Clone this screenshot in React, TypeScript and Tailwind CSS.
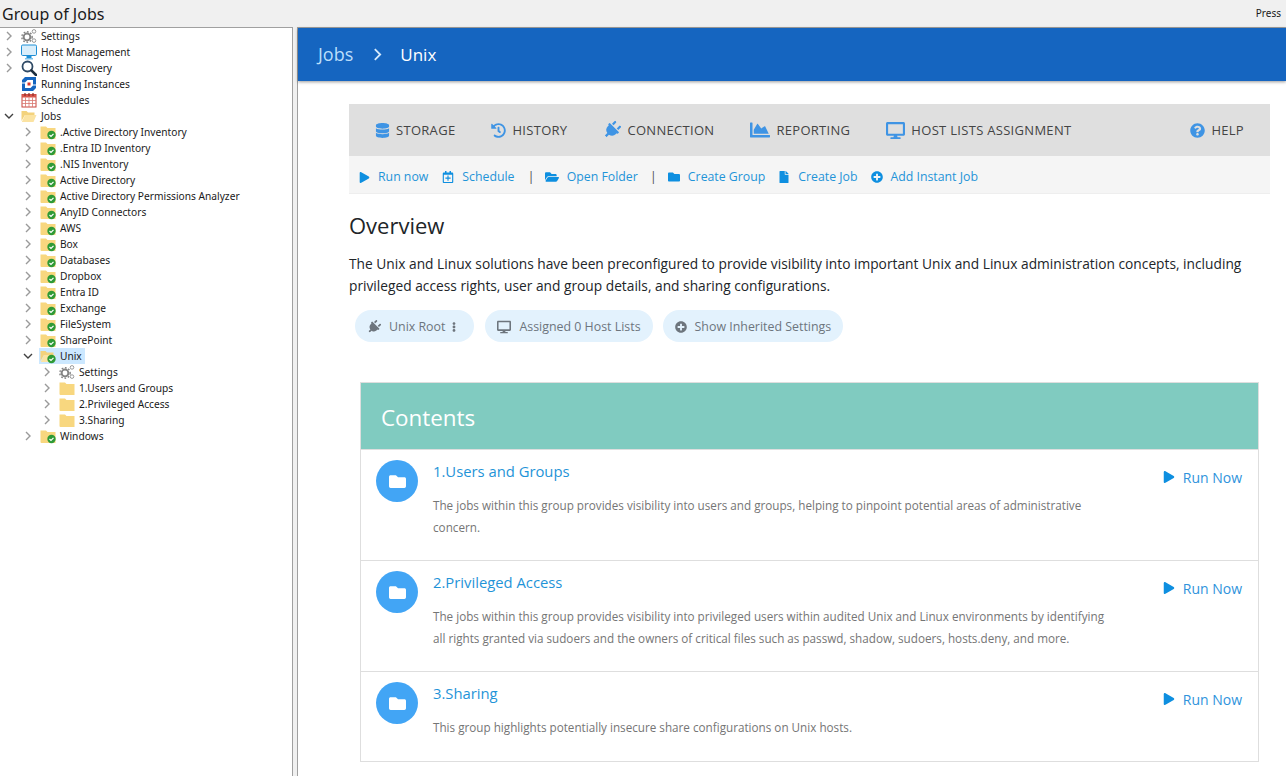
import type { ReactNode } from "react";
import {
  FaChartArea,
  FaDatabase,
  FaDesktop,
  FaEllipsisV,
  FaFile,
  FaFolder,
  FaFolderOpen,
  FaHistory,
  FaPlay,
  FaPlug,
  FaPlusCircle,
  FaQuestionCircle,
  FaRegCalendarPlus,
} from "react-icons/fa";

function GearsIcon() {
  return (
    <svg viewBox="0 0 16 16" className="h-4 w-4">
      <circle cx="6" cy="9" r="3.4" fill="none" stroke="#858585" strokeWidth="2" />
      <circle cx="6" cy="9" r="5.2" fill="none" stroke="#858585" strokeWidth="1.4" strokeDasharray="1.7 1.7" />
      <circle cx="13" cy="3.4" r="1.8" fill="none" stroke="#9a9a9a" strokeWidth="1" />
      <circle cx="13" cy="12.6" r="1.8" fill="none" stroke="#9a9a9a" strokeWidth="1" />
    </svg>
  );
}

function MonitorIcon() {
  return (
    <svg viewBox="0 0 16 16" className="h-4 w-4">
      <rect x="0.5" y="1" width="15" height="10.5" rx="1.2" fill="#d9eefb" stroke="#1d8fd6" />
      <path d="M5.5 12h5v2h-5z" fill="#1d8fd6" />
      <path d="M4 14.2h8v1.2H4z" fill="#56b1e6" />
    </svg>
  );
}

function SearchIcon() {
  return (
    <svg viewBox="0 0 16 16" className="h-4 w-4">
      <circle cx="6.5" cy="6.5" r="5" fill="#fff" stroke="#2f4a66" strokeWidth="1.8" />
      <path d="M10.4 10.4 15 15" stroke="#1f2f40" strokeWidth="2.6" strokeLinecap="round" />
    </svg>
  );
}

function InstancesIcon() {
  return (
    <svg viewBox="0 0 16 16" className="h-4 w-4">
      <path d="M4 1h11v7.5h-3V4H6.5L4 6.5H1V4z" fill="#1565c0" />
      <path d="M12 15H1V7.5h3V12h5.5L12 9.5h3V12z" fill="#1565c0" />
      <rect x="6.5" y="6.5" width="3" height="3" fill="#d8342b" />
    </svg>
  );
}

function CalendarIcon() {
  return (
    <svg viewBox="0 0 16 16" className="h-4 w-4">
      <rect x="1" y="2.5" width="14" height="12.5" fill="#fff" stroke="#c8453c" />
      <rect x="1" y="2.5" width="14" height="3" fill="#d8564c" />
      <path d="M4 1v3M8 1v3M12 1v3" stroke="#8f2f28" strokeWidth="1.2" />
      <path d="M1 8.5h14M1 11.5h14M4.5 5.5V15M8 5.5V15M11.5 5.5V15" stroke="#d8766e" strokeWidth="0.8" />
    </svg>
  );
}

function CheckBadge() {
  return (
    <>
      <circle cx="11.5" cy="11" r="4.2" fill="#2e9a36" />
      <path d="M9.5 11l1.5 1.5 2.5-2.7" fill="none" stroke="#fff" strokeWidth="1.2" />
    </>
  );
}

function OpenFolderIcon({ check = false }: { check?: boolean }) {
  return (
    <svg viewBox="0 0 16 16" className="h-4 w-4">
      <path d="M0.5 3h5l1.5 1.5h6.5V7H4L0.5 13z" fill="#f3d27c" />
      <path d="M4 7h11.5L12.5 14H0.8z" fill="#fbe3a2" />
      {check && <CheckBadge />}
    </svg>
  );
}

function FolderIcon({ check = false }: { check?: boolean }) {
  return (
    <svg viewBox="0 0 16 16" className="h-4 w-4">
      <path d="M0.5 2.5h5.5L7.5 4h8v11H1.5a1 1 0 0 1-1-1z" fill="#f8d77f" />
      {check && <CheckBadge />}
    </svg>
  );
}

function Chevron({ open = false }: { open?: boolean }) {
  return (
    <svg viewBox="0 0 10 10" className="h-[10px] w-[10px] shrink-0">
      <path
        d={open ? "M1 3l4 4 4-4" : "M3 1l4 4-4 4"}
        fill="none"
        stroke={open ? "#404040" : "#9a9a9a"}
        strokeWidth="1.4"
      />
    </svg>
  );
}

type TreeRowProps = {
  level: number;
  label: string;
  icon: ReactNode;
  arrow?: "open" | "closed" | "none";
  selected?: boolean;
};

function TreeRow({ level, label, icon, arrow = "closed", selected = false }: TreeRowProps) {
  const indent = ["pl-1", "pl-[23px]", "pl-[42px]"][level];
  return (
    <div className={`flex h-4 items-center ${indent}`}>
      <span className="w-[10px] shrink-0">
        {arrow !== "none" && <Chevron open={arrow === "open"} />}
      </span>
      <div className={`ml-[6px] flex h-4 items-center pl-px pr-[3px] ${selected ? "bg-[#cce8ff]" : ""}`}>
        {icon}
        <span className="ml-1 whitespace-nowrap text-[10.2px] leading-4 text-[#1a1a1a]">{label}</span>
      </div>
    </div>
  );
}

const jobGroups = [
  ".Active Directory Inventory",
  ".Entra ID Inventory",
  ".NIS Inventory",
  "Active Directory",
  "Active Directory Permissions Analyzer",
  "AnyID Connectors",
  "AWS",
  "Box",
  "Databases",
  "Dropbox",
  "Entra ID",
  "Exchange",
  "FileSystem",
  "SharePoint",
];

function Tree() {
  return (
    <div className="w-[293px] shrink-0 border-r border-t border-[#a0a0a0] bg-white font-['Noto_Sans',sans-serif]">
      <TreeRow level={0} label="Settings" icon={<GearsIcon />} />
      <TreeRow level={0} label="Host Management" icon={<MonitorIcon />} />
      <TreeRow level={0} label="Host Discovery" icon={<SearchIcon />} />
      <TreeRow level={0} label="Running Instances" icon={<InstancesIcon />} arrow="none" />
      <TreeRow level={0} label="Schedules" icon={<CalendarIcon />} arrow="none" />
      <TreeRow level={0} label="Jobs" icon={<OpenFolderIcon />} arrow="open" />
      {jobGroups.map((name) => (
        <TreeRow key={name} level={1} label={name} icon={<FolderIcon check />} />
      ))}
      <TreeRow level={1} label="Unix" icon={<OpenFolderIcon check />} arrow="open" selected />
      <TreeRow level={2} label="Settings" icon={<GearsIcon />} />
      <TreeRow level={2} label="1.Users and Groups" icon={<FolderIcon />} />
      <TreeRow level={2} label="2.Privileged Access" icon={<FolderIcon />} />
      <TreeRow level={2} label="3.Sharing" icon={<FolderIcon />} />
      <TreeRow level={1} label="Windows" icon={<FolderIcon check />} />
    </div>
  );
}

function NavItem({ icon, label }: { icon: ReactNode; label: string }) {
  return (
    <div className="flex items-center gap-[6px] whitespace-nowrap text-[13px] leading-[18px] tracking-[0.3px] text-[#444]">
      <span className="text-[#3f94e4]">{icon}</span>
      <span>{label}</span>
    </div>
  );
}

function ActionItem({ icon, label }: { icon: ReactNode; label: string }) {
  return (
    <div className="flex items-center gap-2 whitespace-nowrap text-[12.3px] text-[#1f94d8]">
      <span className="text-[#0e8fe0]">{icon}</span>
      {label}
    </div>
  );
}

function Pill({ children, className = "" }: { children: ReactNode; className?: string }) {
  return (
    <div className={`flex h-8 items-center gap-[8px] rounded-full bg-[#e3f2fd] px-3 pt-[2px] text-[12.4px] text-[#6d757d] ${className}`}>
      {children}
    </div>
  );
}

type ContentRowProps = {
  title: string;
  text: ReactNode;
  heightClass: string;
};

function ContentRow({ title, text, heightClass }: ContentRowProps) {
  return (
    <div className={`flex border-t border-[#dedede] bg-white pl-[15px] pr-4 pt-[10px] ${heightClass}`}>
      <div className="flex h-[42px] w-[42px] shrink-0 items-center justify-center rounded-full bg-[#42a5f5] text-white">
        <FaFolder size={17} />
      </div>
      <div className="ml-[15px]">
        <div className="text-[14.8px] leading-[22px] text-[#1f94d8]">{title}</div>
        <p className="mt-3 whitespace-nowrap text-[11.7px] leading-[22px] text-[#757575]">{text}</p>
      </div>
      <div className="ml-auto flex h-[34px] items-center gap-2 text-[14px] text-[#2f93dc]">
        <FaPlay size={12} className="text-[#0e8fe0]" />
        Run Now
      </div>
    </div>
  );
}

export default function App() {
  return (
    <div className="flex h-[776px] w-[1286px] flex-col overflow-hidden bg-[#f0f0f0]">
      <div className="flex h-[27px] shrink-0 items-center justify-between pl-[2px] pr-[5px] font-['Noto_Sans',sans-serif] text-[#1a1a1a]">
        <span className="text-[16px]">Group of Jobs</span>
        <span className="text-[10px]">Press</span>
      </div>
      <div className="flex min-h-0 flex-1">
        <Tree />
        <div className="ml-[4px] flex min-w-0 flex-1 flex-col border-l border-t border-[#a0a0a0] bg-white font-['Open_Sans',sans-serif]">
          <div className="flex h-[53px] shrink-0 items-center bg-[#1565c0] pl-5 text-[18px] shadow-[0_1px_3px_rgba(0,0,0,0.4)]">
            <span className="text-[#bbdefb]">Jobs</span>
            <svg viewBox="0 0 10 14" className="ml-5 mr-[18px] h-[13px] w-[9px]">
              <path d="M2 1l6 6-6 6" fill="none" stroke="#d6eafc" strokeWidth="2" />
            </svg>
            <span className="text-[17px] text-white">Unix</span>
          </div>
          <div className="flex-1 pl-[51px] pr-4 pt-[23px]">
            <div className="flex h-[52px] items-center gap-[36px] bg-[#dfdfdf] px-[26px]">
              <NavItem icon={<FaDatabase size={15} />} label="STORAGE" />
              <NavItem icon={<FaHistory size={15} />} label="HISTORY" />
              <NavItem icon={<FaPlug size={18} className="rotate-45" />} label="CONNECTION" />
              <NavItem icon={<FaChartArea size={20} />} label="REPORTING" />
              <NavItem icon={<FaDesktop size={19} />} label="HOST LISTS ASSIGNMENT" />
              <div className="ml-auto">
                <NavItem icon={<FaQuestionCircle size={15} />} label="HELP" />
              </div>
            </div>
            <div className="flex h-[38px] items-center border-b border-[#eeeeee] bg-[#f5f5f5] pl-[10px] pt-[5px]">
              <ActionItem icon={<FaPlay size={11} />} label="Run now" />
              <div className="ml-[14px]">
                <ActionItem icon={<FaRegCalendarPlus size={12} />} label="Schedule" />
              </div>
              <span className="ml-[13px] mr-[10px] text-[13px] text-[#555]">|</span>
              <ActionItem icon={<FaFolderOpen size={14} />} label="Open Folder" />
              <span className="ml-[12px] mr-[11px] text-[13px] text-[#555]">|</span>
              <ActionItem icon={<FaFolder size={12} />} label="Create Group" />
              <div className="ml-[13px]">
                <ActionItem icon={<FaFile size={12} />} label="Create Job" />
              </div>
              <div className="ml-[13px]">
                <ActionItem icon={<FaPlusCircle size={12} />} label="Add Instant Job" />
              </div>
            </div>
            <h1 className="mt-[14px] text-[22px] leading-[34px] text-[#212529]">Overview</h1>
            <p className="mt-[11px] whitespace-nowrap text-[13.75px] leading-[22px] text-[#212529]">
              The Unix and Linux solutions have been preconfigured to provide visibility into important Unix and Linux administration concepts, including
              <br />
              privileged access rights, user and group details, and sharing configurations.
            </p>
            <div className="ml-[6px] mt-[13px] flex gap-[11px]">
              <Pill>
                <FaPlug size={14} className="rotate-45" />
                <span>Unix Root</span>
                <FaEllipsisV size={10} className="-ml-[4px] mr-[3px]" />
              </Pill>
              <Pill>
                <FaDesktop size={14} />
                <span>Assigned 0 Host Lists</span>
              </Pill>
              <Pill className="-ml-px">
                <FaPlusCircle size={12} />
                <span>Show Inherited Settings</span>
              </Pill>
            </div>
            <div className="mx-[11px] mt-10 border border-[#dedede]">
              <div className="flex h-[66px] items-center bg-[#80cbc0] pl-5 pt-[3px] text-[22.4px] text-white">
                Contents
              </div>
              <ContentRow
                title="1.Users and Groups"
                heightClass="h-[111px]"
                text={
                  <>
                    The jobs within this group provides visibility into users and groups, helping to pinpoint potential areas of administrative
                    <br />
                    concern.
                  </>
                }
              />
              <ContentRow
                title="2.Privileged Access"
                heightClass="h-[111px]"
                text={
                  <>
                    The jobs within this group provides visibility into privileged users within audited Unix and Linux environments by identifying
                    <br />
                    all rights granted via sudoers and the owners of critical files such as passwd, shadow, sudoers, hosts.deny, and more.
                  </>
                }
              />
              <ContentRow
                title="3.Sharing"
                heightClass="h-[90px]"
                text="This group highlights potentially insecure share configurations on Unix hosts."
              />
            </div>
          </div>
        </div>
      </div>
    </div>
  );
}
